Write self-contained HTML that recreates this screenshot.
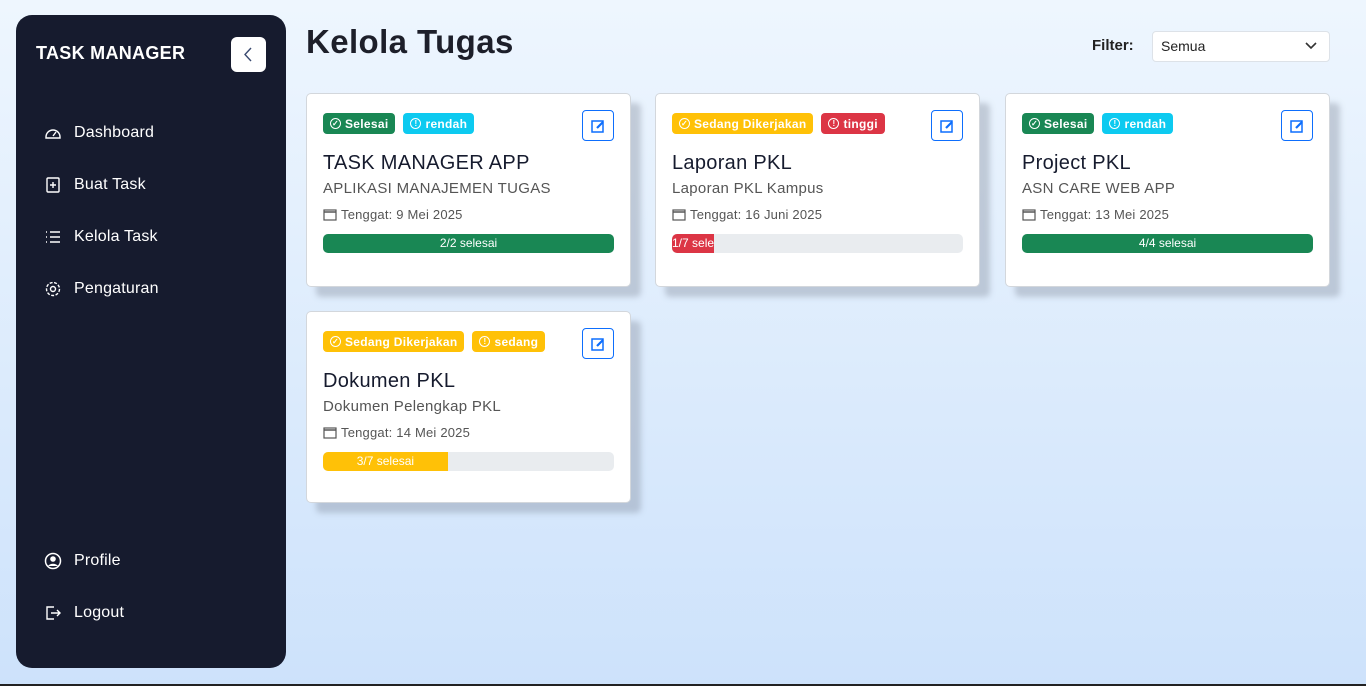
<!DOCTYPE html>
<html><head><meta charset="utf-8"><style>
*{box-sizing:border-box;margin:0;padding:0}
body{width:1366px;height:686px;overflow:hidden;font-family:"Liberation Sans",sans-serif;background:linear-gradient(180deg,#eef6fe 0%,#cde2fb 100%);position:relative}
.side{position:absolute;left:16px;top:15px;width:270px;height:653px;background:#161b2e;border-radius:16px;color:#fff}
.brand{position:absolute;left:20px;top:28px;font-weight:bold;font-size:18px;letter-spacing:.3px}
.tog{position:absolute;left:215px;top:22px;width:35px;height:35px;background:#fff;border-radius:6px}
.nav{position:absolute;left:28px;font-size:16px;display:flex;align-items:center;gap:12px;letter-spacing:.2px}
.nav svg{width:18px;height:18px}
h1{position:absolute;left:306px;top:23px;font-size:33px;font-weight:bold;color:#1d1f2a;letter-spacing:.4px}
.flt{position:absolute;left:1092px;top:37px;font-weight:bold;font-size:15px;color:#222}
.sel{position:absolute;left:1152px;top:31px;width:178px;height:31px;background:#fff;border:1px solid #dde2e8;border-radius:4px;font-size:14px;padding:6px 8px;color:#222}
.sel svg{position:absolute;right:12px;top:10px}
.card{position:absolute;width:325px;height:194px;background:#fff;border:1px solid #d3d7dc;border-radius:5px;box-shadow:10px 10px 6px rgba(120,130,145,.35);padding:0 16px}
.badges{position:absolute;left:16px;top:19px;display:flex;gap:8px}
.b{height:21px;border-radius:4px;color:#fff;font-weight:bold;font-size:12px;padding:0 7px;display:flex;align-items:center;gap:4px;letter-spacing:.3px}
.b i{width:11px;height:11px;border:1.3px solid #fff;border-radius:50%;display:inline-block;font-style:normal;font-size:8px;line-height:9px;text-align:center}
.g{background:#198754}.c{background:#0dcaf0}.y{background:#ffc107}.r{background:#dc3545}
.ed{position:absolute;right:16px;top:16px;width:32px;height:31px;border:1px solid #0d6efd;border-radius:4px;display:flex;align-items:center;justify-content:center}
.t{position:absolute;left:16px;top:58px;font-size:20px;color:#161b2e;letter-spacing:.3px}
.s{position:absolute;left:16px;top:86px;font-size:15px;color:#555;letter-spacing:.3px}
.d{position:absolute;left:16px;top:113px;font-size:13px;color:#555;display:flex;align-items:center;gap:4px;letter-spacing:.2px}
.pb{position:absolute;left:16px;right:16px;top:140px;height:19px;background:#e9ecef;border-radius:5px;overflow:hidden}
.pf{height:100%;color:#fff;font-size:12px;text-align:center;line-height:19px;white-space:nowrap;overflow:hidden}
</style></head><body>
<div class="side">
<div class="brand">TASK MANAGER</div>
<div class="tog"><svg width="35" height="35"><path d="M20 11l-6 6.5 6 6.5" stroke="#3a4a70" stroke-width="1.4" fill="none"/></svg></div>
<div class="nav" style="top:109px"><svg viewBox="0 0 18 18" fill="none" stroke="#fff" stroke-width="1.4"><path d="M2 13a7 7 0 1 1 14 0v1H2z"/><path d="M9 12l3-4"/></svg>Dashboard</div>
<div class="nav" style="top:161px"><svg viewBox="0 0 18 18" fill="none" stroke="#fff" stroke-width="1.4"><rect x="3" y="2" width="12" height="14" rx="1"/><path d="M9 6v6M6 9h6"/></svg>Buat Task</div>
<div class="nav" style="top:213px"><svg viewBox="0 0 18 18" fill="none" stroke="#fff" stroke-width="1.4"><path d="M6 4h10M6 9h10M6 14h10M2 4h1M2 9h1M2 14h1"/></svg>Kelola Task</div>
<div class="nav" style="top:265px"><svg viewBox="0 0 18 18" fill="none" stroke="#fff" stroke-width="1.4"><circle cx="9" cy="9" r="2.5"/><circle cx="9" cy="9" r="6.5" stroke-dasharray="3 1.5"/></svg>Pengaturan</div>
<div class="nav" style="top:537px"><svg viewBox="0 0 18 18"><circle cx="9" cy="9" r="7.5" fill="none" stroke="#fff" stroke-width="1.5"/><circle cx="9" cy="7" r="2.8" fill="#fff"/><path d="M4 14c2-3 8-3 10 0" fill="#fff"/></svg>Profile</div>
<div class="nav" style="top:589px"><svg viewBox="0 0 18 18" fill="none" stroke="#fff" stroke-width="1.4"><path d="M10 3H3v12h7M7 9h9M13 6l3 3-3 3"/></svg>Logout</div>
</div>
<h1>Kelola Tugas</h1>
<div class="flt">Filter:</div>
<div class="sel">Semua<svg width="12" height="8"><path d="M1 1l5 5 5-5" stroke="#333" stroke-width="1.6" fill="none"/></svg></div>

<div class="card" style="left:306px;top:93px">
<div class="badges"><span class="b g"><i>✓</i>Selesai</span><span class="b c"><i>!</i>rendah</span></div>
<div class="ed"><svg width="14" height="14"><rect x="1" y="2" width="11" height="11" fill="none" stroke="#0d6efd" stroke-width="1.5"/><path d="M6 9l6-6" stroke="#0d6efd" stroke-width="2.2"/></svg></div>
<div class="t">TASK MANAGER APP</div><div class="s">APLIKASI MANAJEMEN TUGAS</div>
<div class="d"><svg width="14" height="13"><rect x="1" y="2" width="12" height="10" fill="none" stroke="#555" stroke-width="1.2"/><path d="M1 4h12" stroke="#555" stroke-width="1.5"/></svg>Tenggat: 9 Mei 2025</div>
<div class="pb"><div class="pf g" style="width:100%">2/2 selesai</div></div></div>

<div class="card" style="left:655px;top:93px">
<div class="badges"><span class="b y"><i>✓</i>Sedang Dikerjakan</span><span class="b r"><i>!</i>tinggi</span></div>
<div class="ed"><svg width="14" height="14"><rect x="1" y="2" width="11" height="11" fill="none" stroke="#0d6efd" stroke-width="1.5"/><path d="M6 9l6-6" stroke="#0d6efd" stroke-width="2.2"/></svg></div>
<div class="t">Laporan PKL</div><div class="s">Laporan PKL Kampus</div>
<div class="d"><svg width="14" height="13"><rect x="1" y="2" width="12" height="10" fill="none" stroke="#555" stroke-width="1.2"/><path d="M1 4h12" stroke="#555" stroke-width="1.5"/></svg>Tenggat: 16 Juni 2025</div>
<div class="pb"><div class="pf r" style="width:14.3%;text-align:left">1/7 selesai</div></div></div>

<div class="card" style="left:1005px;top:93px">
<div class="badges"><span class="b g"><i>✓</i>Selesai</span><span class="b c"><i>!</i>rendah</span></div>
<div class="ed"><svg width="14" height="14"><rect x="1" y="2" width="11" height="11" fill="none" stroke="#0d6efd" stroke-width="1.5"/><path d="M6 9l6-6" stroke="#0d6efd" stroke-width="2.2"/></svg></div>
<div class="t">Project PKL</div><div class="s">ASN CARE WEB APP</div>
<div class="d"><svg width="14" height="13"><rect x="1" y="2" width="12" height="10" fill="none" stroke="#555" stroke-width="1.2"/><path d="M1 4h12" stroke="#555" stroke-width="1.5"/></svg>Tenggat: 13 Mei 2025</div>
<div class="pb"><div class="pf g" style="width:100%">4/4 selesai</div></div></div>

<div class="card" style="left:306px;top:311px;height:192px">
<div class="badges"><span class="b y"><i>✓</i>Sedang Dikerjakan</span><span class="b y"><i>!</i>sedang</span></div>
<div class="ed"><svg width="14" height="14"><rect x="1" y="2" width="11" height="11" fill="none" stroke="#0d6efd" stroke-width="1.5"/><path d="M6 9l6-6" stroke="#0d6efd" stroke-width="2.2"/></svg></div>
<div class="t">Dokumen PKL</div><div class="s">Dokumen Pelengkap PKL</div>
<div class="d"><svg width="14" height="13"><rect x="1" y="2" width="12" height="10" fill="none" stroke="#555" stroke-width="1.2"/><path d="M1 4h12" stroke="#555" stroke-width="1.5"/></svg>Tenggat: 14 Mei 2025</div>
<div class="pb"><div class="pf y" style="width:42.9%">3/7 selesai</div></div></div>
<div style="position:absolute;left:0;top:684px;width:1366px;height:2px;background:#222"></div>
</body></html>
